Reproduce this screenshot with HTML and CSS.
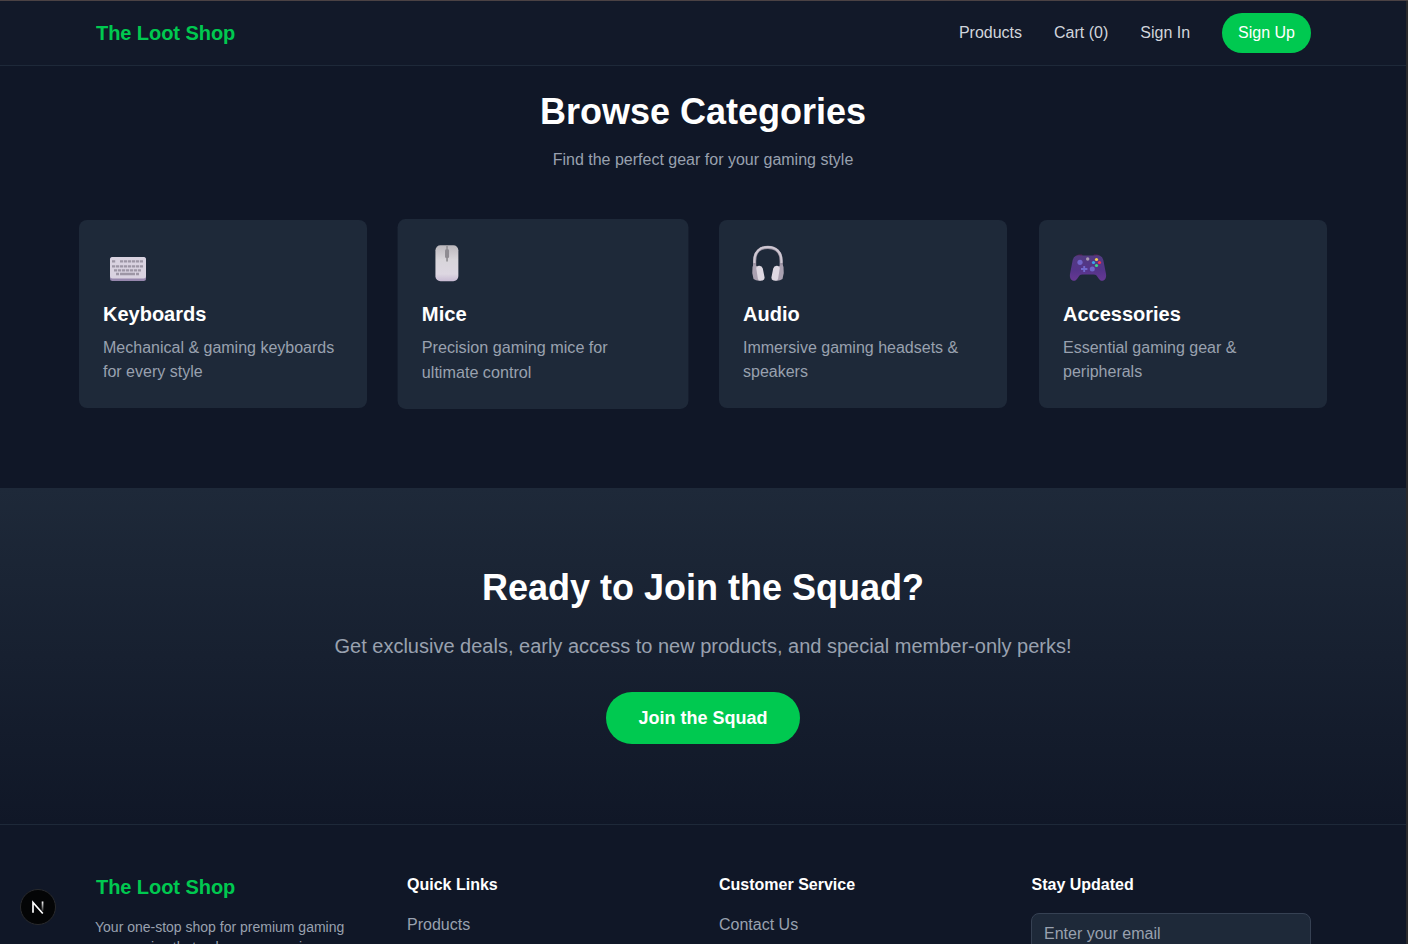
FILE: index.html
```html
<!DOCTYPE html>
<html lang="en">
<head>
<meta charset="utf-8">
<title>The Loot Shop</title>
<link rel="stylesheet" href="styles.css">
</head>
<body>
<div class="page">
  <header class="header">
    <div class="header-inner">
      <a class="brand">The Loot Shop</a>
      <nav class="nav">
        <a>Products</a><a>Cart (0)</a><a>Sign In</a><a class="signup">Sign Up</a>
      </nav>
    </div>
  </header>
  <section class="categories">
    <h2>Browse Categories</h2>
    <p class="lead">Find the perfect gear for your gaming style</p>
    <div class="cards">
      <article class="card">
        <svg class="icon" viewBox="0 0 50 40">
          <rect x="7" y="13" width="36" height="24" rx="2.5" fill="#9687ad"/>
          <rect x="7" y="13" width="36" height="21.5" rx="2.5" fill="#d9d2e0"/>
          <g stroke="#9d96a5" stroke-width="2.4" fill="none">
            <path d="M9 17.4h4M17 17.4h23" stroke-dasharray="3.2 .8"/>
            <path d="M9 22.4h31" stroke-dasharray="3.2 .8"/>
            <path d="M11 26.4h27" stroke-dasharray="3.2 .8"/>
            <path d="M13 30h3M17 30h15M33 30h3"/>
          </g>
        </svg>
        <h3>Keyboards</h3>
        <p>Mechanical &amp; gaming keyboards for every style</p>
      </article>
      <article class="card active">
        <svg class="icon" viewBox="0 0 50 40">
          <defs>
            <linearGradient id="mouse" x1="0" y1="0" x2="0" y2="1"><stop stop-color="#bcb8bd"/><stop offset=".4" stop-color="#d8d5da"/><stop offset=".8" stop-color="#ddd7e1"/><stop offset="1" stop-color="#c8bbd3"/></linearGradient>
          </defs>
          <rect x="13.5" y="2" width="22.7" height="35.5" rx="5" fill="url(#mouse)"/>
          <path d="M25 2v16" stroke="#99979b" stroke-width="1.9"/>
          <rect x="23" y="6" width="4" height="8.5" rx="1.3" fill="#8e8b91"/>
        </svg>
        <h3>Mice</h3>
        <p>Precision gaming mice for ultimate control</p>
      </article>
      <article class="card">
        <svg class="icon" viewBox="0 0 50 40">
          <path d="M11.6 23V17C11.6 8 17 3.300 24.900 3.300S38.200 8 38.200 17v6" fill="none" stroke="#9e95a5" stroke-width="3.200"/>
          <path d="M11.400 19V16.500C11.400 7.800 17 2.900 24.900 2.900S38.400 7.800 38.400 16.500V19" fill="none" stroke="#cfc8d3" stroke-width="2"/>
          <path d="M10.500 20.500l4 2 3 14q-4 .6-7-1.500-2-6-1-12z" fill="#aaa1b1"/>
          <path d="M39.500 20.500l-4 2-3 14q4 .6 7-1.500 2-6 1-12z" fill="#aaa1b1"/>
          <path d="M13.200 24q.3-2 2.600-2.200 3.200-.3 4 2.700l1.800 9q.2 2.500-2.200 2.900l-2 .3q-2 .2-2.500-2z" fill="#ded8e2"/>
          <path d="M36.800 24q-.3-2-2.600-2.200-3.200-.3-4 2.700l-1.800 9q-.2 2.500 2.200 2.900l2 .3q2 .2 2.500-2z" fill="#ded8e2"/>
        </svg>
        <h3>Audio</h3>
        <p>Immersive gaming headsets &amp; speakers</p>
      </article>
      <article class="card">
        <svg class="icon" viewBox="0 0 50 40">
          <defs><linearGradient id="pad" x1="0" y1="0" x2="0" y2="1"><stop stop-color="#513b80"/><stop offset=".6" stop-color="#55348a"/><stop offset="1" stop-color="#673894"/></linearGradient></defs>
          <path d="M13 12q1-1.500 3-1.500h3l1 2M37 12q-1-1.500-3-1.500h-3l-1 2" fill="#562052"/>
          <path d="M13 11.700q2-.7 5-.3h14q3-.4 5 .3 2.500 1 3.300 4.300L43 30c1 6-4 9-7 5l-2.500-3.500q-1-1-3-1h-11q-2 0-3 1L14 35c-3 4-8 1-7-5l2.700-14q.8-3.300 3.300-4.300z" fill="url(#pad)"/>
          <circle cx="17" cy="18.300" r="2.600" fill="#7165c9"/><circle cx="29.300" cy="25" r="2.500" fill="#7165c9"/>
          <path d="M18 25h6.400M21.200 22v6" stroke="#7168ce" stroke-width="1.900"/>
          <circle cx="24.700" cy="15" r="1.700" fill="#a79ab0"/>
          <circle cx="33.500" cy="15.500" r="1.600" fill="#f5d052"/><circle cx="36.500" cy="18.500" r="1.600" fill="#ef3550"/>
          <circle cx="30.500" cy="18.500" r="1.600" fill="#39a7ed"/><circle cx="33.500" cy="21.500" r="1.600" fill="#3ed58b"/>
        </svg>
        <h3>Accessories</h3>
        <p>Essential gaming gear &amp; peripherals</p>
      </article>
    </div>
  </section>
  <section class="cta">
    <h2>Ready to Join the Squad?</h2>
    <p>Get exclusive deals, early access to new products, and special member-only perks!</p>
    <a class="join">Join the Squad</a>
  </section>
  <footer class="footer">
    <div class="footer-grid">
      <div><div class="brand">The Loot Shop</div><p class="about">Your one-stop shop for premium gaming accessories that enhance your wins.</p></div>
      <div><h4>Quick Links</h4><a>Products</a></div>
      <div><h4>Customer Service</h4><a>Contact Us</a></div>
      <div><h4 class="updates">Stay Updated</h4><input class="email" type="email" placeholder="Enter your email"></div>
    </div>
  </footer>
</div>
<div class="dev-badge">
  <svg viewBox="0 0 34 34"><defs><linearGradient id="stem" x1="0" y1="0" x2="0" y2="1"><stop stop-color="#fff"/><stop offset="1" stop-color="#fff" stop-opacity=".15"/></linearGradient></defs><path d="M12 22.800V12.500L21.800 23.500" fill="none" stroke="#fff" stroke-width="1.700"/><rect x="20.700" y="11.500" width="1.700" height="9.500" fill="url(#stem)"/></svg>
</div>
</body>
</html>
```
FILE: styles.css
```css
* { box-sizing: border-box; }
html { overflow: hidden; background: #2a2a2c; }
body { margin: 0; height: 944px; overflow: hidden; font: 16px/24px "Liberation Sans", Arial, sans-serif; color: #fff; border-top: 1px solid #4b4244; }
h2, h3, h4, p { margin: 0; }
.page { width: 1406px; height: 943px; overflow: hidden; background: #101727; }
.header { height: 65px; border-bottom: 1px solid #1e2939; background: #121929; }
.header-inner { width: 1216px; height: 64px; margin: 0 auto; display: flex; align-items: center; justify-content: space-between; }
.brand { font-size: 20px; line-height: 28px; font-weight: 700; letter-spacing: -.06px; color: #00c950; padding-left: 1px; }
.nav { display: flex; align-items: center; gap: 32px; color: #d1d5dc; }
.signup { color: #fff; background: #00c950; border-radius: 20px; padding: 8px 16px; }
.categories { width: 1248px; height: 422px; margin: 0 auto; padding-top: 26px; text-align: center; }
h2 { font-size: 36px; line-height: 40px; }
.lead { margin-top: 16px; color: #99a1af; }
.cards { margin-top: 48px; display: grid; grid-template-columns: repeat(4, 288px); gap: 32px; text-align: left; }
.card { height: 188px; border-radius: 8px; background: #1e2939; padding: 24px; }
.card.active { transform: scale(1.01); }
.icon { display: block; width: 50px; height: 40px; }
h3 { margin-top: 16px; font-size: 20px; line-height: 28px; }
.card p { margin-top: 8px; color: #99a1af; }
.cta { height: 336px; padding-top: 80px; text-align: center; background: linear-gradient(#1e2939, #101727); }
.cta p { margin: 24px 0 32px; font-size: 20px; line-height: 28px; color: #99a1af; }
.join { display: inline-block; background: #00c950; border-radius: 26px; padding: 12px 32px; font-size: 18px; line-height: 28px; font-weight: 700; }
.footer { border-top: 1px solid #1e2939; padding-top: 48px; }
.footer-grid { width: 1216px; margin: 0 auto; display: grid; grid-template-columns: repeat(4, 280px); gap: 32px; color: #99a1af; }
.about { margin-top: 16px; font-size: 14px; line-height: 20px; }
h4 { margin-bottom: 16px; font-size: 16px; color: #fff; }
.updates { padding-left: .5px; }
.email { display: block; width: 280px; height: 42px; padding: 8px 12px; font: inherit; background: #1e2939; border: 1px solid #364153; border-radius: 8px; }
.email::placeholder { color: #99a1af; }
.dev-badge { position: absolute; left: 20px; top: 889px; width: 36px; height: 36px; border-radius: 50%; background: #040506; border: 1px solid #292a2d; }
.dev-badge svg { display: block; width: 34px; height: 34px; }
```
